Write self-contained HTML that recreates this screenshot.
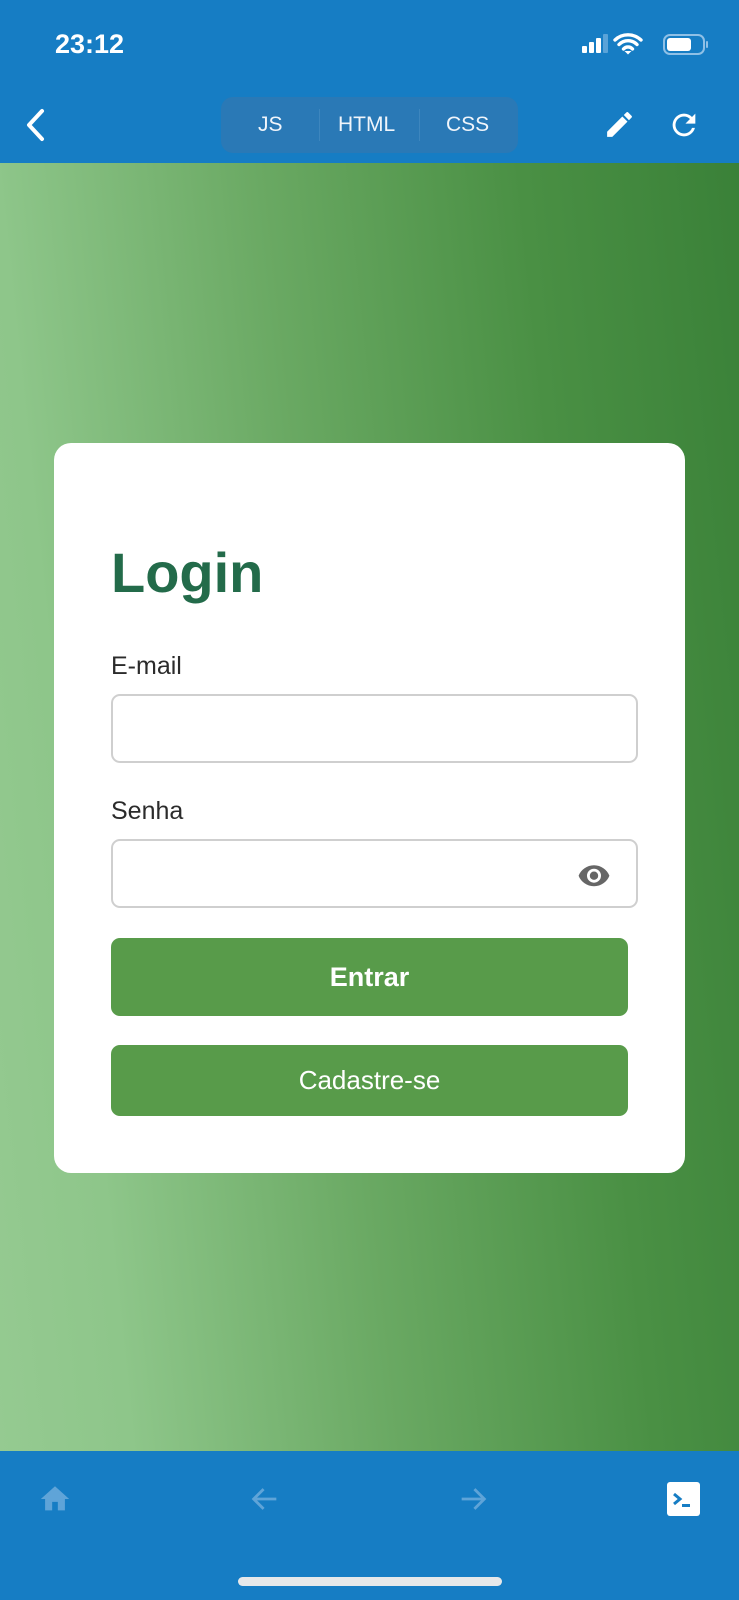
<!DOCTYPE html>
<html><head><meta charset="utf-8"><style>
*{margin:0;padding:0;box-sizing:border-box}
body{width:739px;height:1600px;overflow:hidden;font-family:"Liberation Sans",Arial,sans-serif;position:relative;background:#167dc4}
.top{position:absolute;left:0;top:0;width:739px;height:163px;background:#167dc4;color:#fff}
.time{position:absolute;left:55px;top:29px;font-size:27px;font-weight:600}
.seg{position:absolute;left:221px;top:97px;width:297px;height:56px;border-radius:12px;background:#2a79b6}
.seg span{position:absolute;top:16px;font-size:21px;color:#f0f5fb}
.seg i{position:absolute;top:12px;width:1px;height:32px;background:#3d86be}
.main{position:absolute;left:0;top:163px;width:739px;height:1288px;background:linear-gradient(84deg,#95ca91 0%,#8ec68a 15%,#6aa963 45%,#4a9044 75%,#3a8138 100%)}
.card{position:absolute;left:54px;top:443px;width:631px;height:730px;background:#fff;border-radius:17px}
h1{position:absolute;left:111px;top:540px;font-size:56px;color:#236b4a;font-weight:700}
.lbl{position:absolute;left:111px;font-size:25px;color:#2b2b2b}
.inp{position:absolute;left:111px;width:527px;height:69px;border:2px solid #cfcfcf;border-radius:9px;background:#fff}
.btn{position:absolute;left:111px;width:517px;background:#589b4a;border-radius:9px;color:#fff;text-align:center;font-size:26px}
.bot{position:absolute;left:0;top:1451px;width:739px;height:149px;background:#167dc4}
.ind{position:absolute;left:238px;top:1577px;width:264px;height:9px;border-radius:5px;background:#e6e8ea}
</style></head><body>
<div class="top">
<div class="time">23:12</div>
<svg style="position:absolute;left:580px;top:31px" width="130" height="26" viewBox="0 0 130 26">
<rect x="2" y="15" width="5" height="7" rx="1" fill="#fff"/><rect x="9" y="11" width="5" height="11" rx="1" fill="#fff"/><rect x="16" y="7" width="5" height="15" rx="1" fill="#fff"/><rect x="23" y="3" width="5" height="19" rx="1" fill="#5aa3d8"/>
<path d="M35 9a19 19 0 0 1 26 0M39 13.5a12.5 12.5 0 0 1 18 0M43.5 18a6 6 0 0 1 9 0" stroke="#fff" stroke-width="3.4" fill="none" stroke-linecap="round"/><path d="M44.5 20l3.5 3.5 3.5-3.5z" fill="#fff"/>
<rect x="84" y="4" width="40" height="19" rx="6" fill="none" stroke="#8fc0e6" stroke-width="2"/><rect x="87" y="7" width="24" height="13" rx="3" fill="#fff"/><rect x="126" y="10" width="2" height="7" rx="1" fill="#8fc0e6"/>
</svg>
<svg style="position:absolute;left:22px;top:107px" width="26" height="36" viewBox="0 0 26 36"><path d="M20 4L7 18l13 14" stroke="#fff" stroke-width="4" fill="none" stroke-linecap="round" stroke-linejoin="round"/></svg>
<div class="seg"><span style="left:37px">JS</span><i style="left:98px"></i><span style="left:117px">HTML</span><i style="left:198px"></i><span style="left:225px">CSS</span></div>
<svg style="position:absolute;left:603px;top:108px" width="33" height="33" viewBox="0 0 24 24"><path d="M3 17.25V21h3.75L17.81 9.94l-3.75-3.75L3 17.25zM20.71 7.04a1 1 0 0 0 0-1.41l-2.34-2.34a1 1 0 0 0-1.41 0l-1.83 1.83 3.75 3.75 1.83-1.83z" fill="#fff"/></svg>
<svg style="position:absolute;left:667px;top:108px" width="34" height="34" viewBox="0 0 24 24"><path d="M17.65 6.35A7.96 7.96 0 0 0 12 4a8 8 0 1 0 7.73 10h-2.08A6 6 0 1 1 12 6c1.66 0 3.140.69 4.22 1.78L13 11h7V4l-2.350 2.35z" fill="#fff"/></svg>
</div>
<div class="main"></div>
<div class="card"></div>
<h1>Login</h1>
<div class="lbl" style="top:652px">E-mail</div>
<div class="inp" style="top:694px"></div>
<div class="lbl" style="top:797px">Senha</div>
<div class="inp" style="top:839px"></div>
<svg style="position:absolute;left:577px;top:861px" width="34" height="28" viewBox="0 0 24 20"><path d="M12 3C7 3 2.7 6.1 1 10.5 2.7 14.9 7 18 12 18s9.3-3.1 11-7.5C21.3 6.1 17 3 12 3zm0 12.5a5 5 0 1 1 0-10 5 5 0 0 1 0 10zm0-8a3 3 0 1 0 0 6 3 3 0 0 0 0-6z" fill="#666"/></svg>
<div class="btn" style="top:938px;height:78px;line-height:78px;font-weight:700;font-size:27px">Entrar</div>
<div class="btn" style="top:1045px;height:71px;line-height:71px">Cadastre-se</div>
<div class="bot">
<svg style="position:absolute;left:38px;top:31px" width="34" height="34" viewBox="0 0 24 24"><path d="M10 20v-6h4v6h5v-8h3L12 3 2 12h3v8z" fill="#5fa4d8"/></svg>
<svg style="position:absolute;left:248px;top:31px" width="34" height="34" viewBox="0 0 24 24"><path d="M20 12H5M11 5l-7 7 7 7" stroke="#5fa4d8" stroke-width="2" fill="none"/></svg>
<svg style="position:absolute;left:456px;top:31px" width="34" height="34" viewBox="0 0 24 24"><path d="M4 12h15M13 5l7 7-7 7" stroke="#5fa4d8" stroke-width="2" fill="none"/></svg>
<svg style="position:absolute;left:666px;top:30px" width="35" height="36" viewBox="0 0 35 36"><rect x="1" y="1" width="33" height="34" rx="3" fill="#fff"/><path d="M8 13l6 5-6 5" stroke="#167dc4" stroke-width="3" fill="none"/><rect x="16" y="23" width="8" height="3" fill="#167dc4"/></svg>
</div>
<div class="ind"></div>
</body></html>
